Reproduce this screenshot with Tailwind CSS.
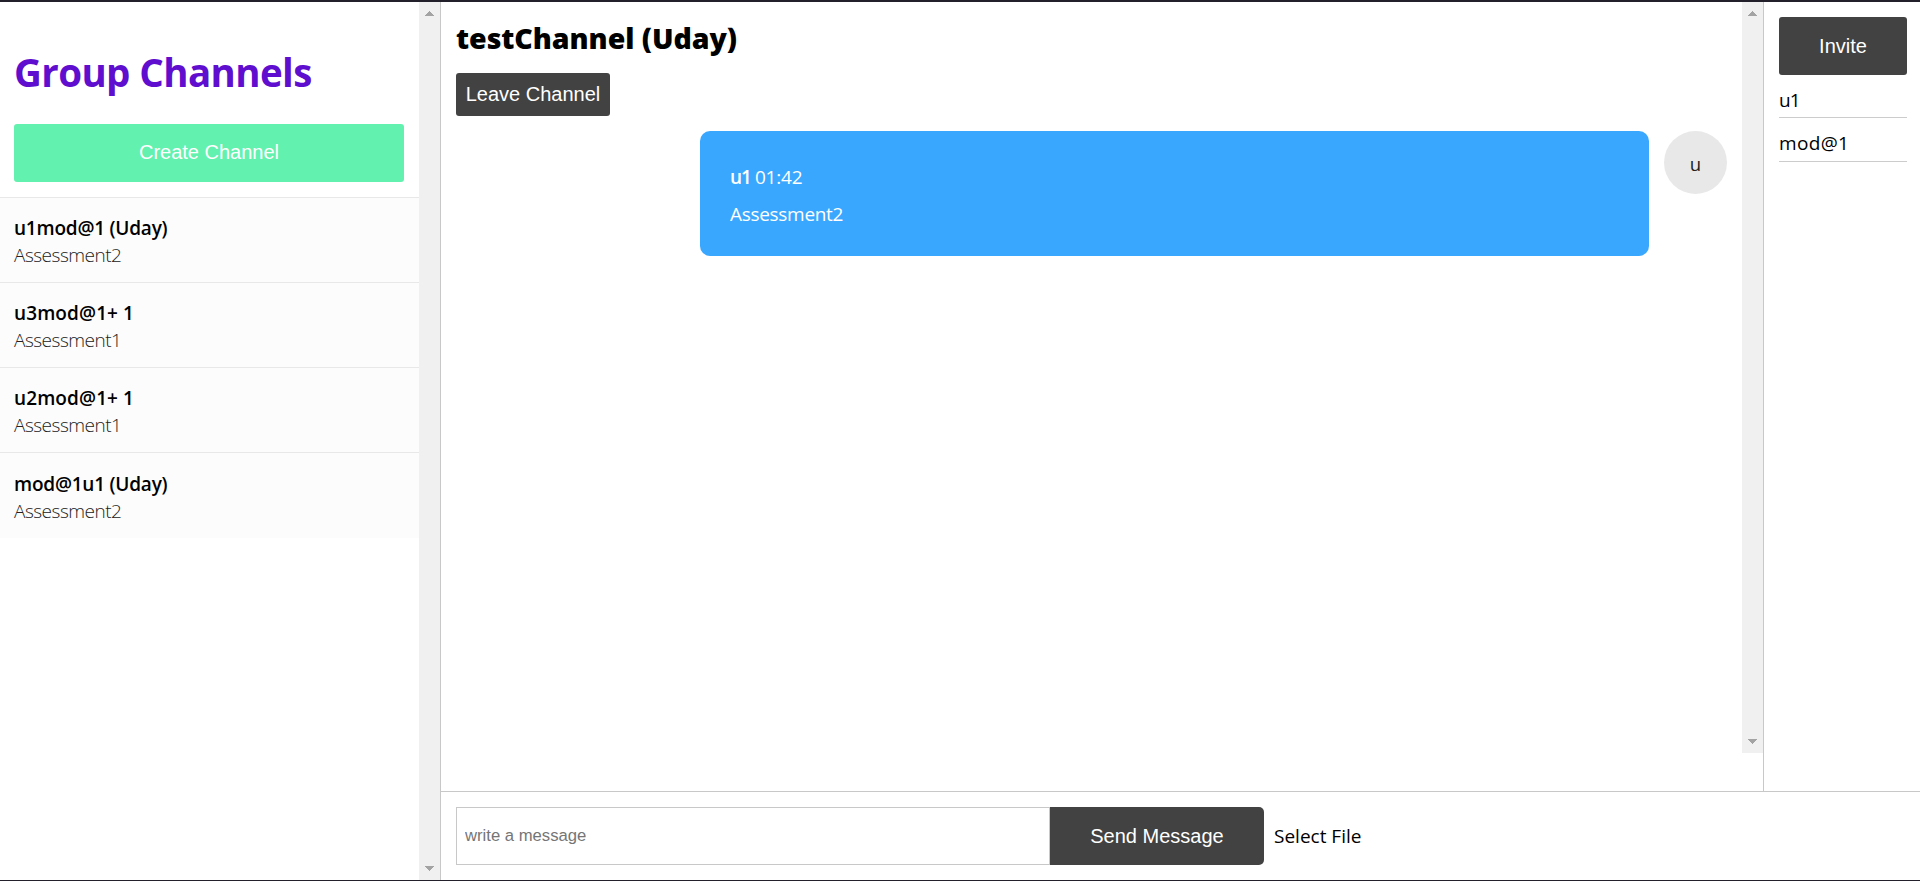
<!DOCTYPE html>
<html lang="en">
<head>
<meta charset="utf-8">
<title>Group Channels</title>
<script src="https://cdn.jsdelivr.net/npm/@tailwindcss/browser@4"></script>
</head>
<body class="flex h-[881px] overflow-hidden bg-white text-black border-t-2 border-b border-[#231f2b] font-['Open_Sans','Noto_Sans',sans-serif] text-[19px] leading-[27px] whitespace-nowrap">
  <aside class="flex w-[441px] shrink-0 border-r border-[#c8c8c8]">
    <div class="w-[419px]">
      <h1 class="mt-[43px] ml-[14px] h-[54px] text-[38.5px] leading-[55px] font-bold tracking-[-0.6px] text-[#5f0dce]">Group Channels</h1>
      <button class="mt-[25px] mx-[14px] block h-[58px] w-[390px] rounded-[3px] bg-[#62f1ae] pb-0.5 text-[20px] text-white font-['Liberation_Sans',sans-serif]">Create Channel</button>
      <ul class="mt-[15px]">
        <li class="h-[85px] border-t border-[#e8e8e8] bg-[#fcfcfc] pl-[14px] pt-[17px]">
          <div class="font-semibold tracking-[-0.22px]">u1mod@1 (Uday)</div>
          <div class="font-light tracking-[-0.5px] text-[#222]">Assessment2</div>
        </li>
        <li class="h-[85px] border-t border-[#e8e8e8] bg-[#fcfcfc] pl-[14px] pt-[17px]">
          <div class="font-semibold tracking-[0.1px]">u3mod@1+ 1</div>
          <div class="font-light tracking-[-0.5px] text-[#222]">Assessment1</div>
        </li>
        <li class="h-[85px] border-t border-[#e8e8e8] bg-[#fcfcfc] pl-[14px] pt-[17px]">
          <div class="font-semibold tracking-[0.1px]">u2mod@1+ 1</div>
          <div class="font-light tracking-[-0.5px] text-[#222]">Assessment1</div>
        </li>
        <li class="h-[86px] border-t border-[#e8e8e8] bg-[#fcfcfc] pl-[14px] pt-[18px]">
          <div class="font-semibold tracking-[-0.22px]">mod@1u1 (Uday)</div>
          <div class="font-light tracking-[-0.5px] text-[#222]">Assessment2</div>
        </li>
      </ul>
    </div>
    <div class="flex w-[21px] flex-col items-center justify-between bg-[#f0f0f0] py-[9px] pr-px">
      <svg class="h-[5px] w-[9px]" viewBox="0 0 9 5" fill="#a3a3a3" shape-rendering="crispEdges"><path d="M4 0h1v1h1v1h1v1h1v1h1v1H0V4h1V3h1V2h1V1h1z"/></svg>
      <svg class="h-[5px] w-[9px]" viewBox="0 0 9 5" fill="#a3a3a3" shape-rendering="crispEdges"><path d="M0 0h9v1H8v1H7v1H6v1H5v1H4V4H3V3H2V2H1V1H0z"/></svg>
    </div>
  </aside>

  <div class="flex min-w-0 flex-1 flex-col">
    <div class="flex h-[789px]">
      <main class="flex w-[1323px] border-r border-[#c8c8c8]">
        <section class="w-[1301px] pt-4 px-[15px]">
          <h2 class="h-10 text-[28.5px] leading-[41px] font-extrabold tracking-[-0.05px]">testChannel (Uday)</h2>
          <button class="mt-[15px] block h-[43px] w-[154px] rounded-[3px] bg-[#424242] pb-px text-[20px] text-white font-['Liberation_Sans',sans-serif]">Leave Channel</button>
          <div class="mt-[15px] flex items-start justify-end gap-[15px]">
            <article class="h-[125px] w-[949px] rounded-[10px] bg-[#3aa7ff] px-[30px] pt-[33px] text-white">
              <div class="flex gap-1"><span class="font-semibold tracking-[-1px]">u1</span><span class="tracking-[-0.2px]">01:42</span></div>
              <p class="mt-2.5 tracking-[-0.3px]">Assessment2</p>
            </article>
            <div class="flex size-[63px] items-center justify-center rounded-full bg-[#e8e8e8] pt-[2px] text-[18.5px] text-[#222]">u</div>
          </div>
        </section>
        <div class="flex h-[751px] w-[21px] flex-col items-center justify-between bg-[#f0f0f0] py-[9px] pr-px">
          <svg class="h-[5px] w-[9px]" viewBox="0 0 9 5" fill="#a3a3a3" shape-rendering="crispEdges"><path d="M4 0h1v1h1v1h1v1h1v1h1v1H0V4h1V3h1V2h1V1h1z"/></svg>
          <svg class="h-[5px] w-[9px]" viewBox="0 0 9 5" fill="#a3a3a3" shape-rendering="crispEdges"><path d="M0 0h9v1H8v1H7v1H6v1H5v1H4V4H3V3H2V2H1V1H0z"/></svg>
        </div>
      </main>
      <aside class="w-[156px] pt-[15px] pl-[15px] pr-[13px]">
        <button class="block h-[58px] w-32 rounded-[3px] bg-[#424242] text-[20px] text-white font-['Liberation_Sans',sans-serif]">Invite</button>
        <div class="mt-[11px] h-8 border-b border-[#ccc] pt-px font-medium tracking-[-0.9px]">u1</div>
        <div class="mt-[11px] h-[33px] border-b border-[#ccc] pt-px font-medium tracking-[0.35px]">mod@1</div>
      </aside>
    </div>
    <form class="flex flex-1 items-start border-t border-[#c8c8c8] pt-[15px] pl-[15px]">
      <input class="h-[58px] w-[594px] border border-[#c8c8c8] px-2 pb-px text-[16.67px] font-['Liberation_Sans',sans-serif] placeholder:text-[#757575]" placeholder="write a message">
      <button type="button" class="h-[58px] w-[214px] rounded-r-[5px] bg-[#424242] text-[20px] text-white font-['Liberation_Sans',sans-serif]">Send Message</button>
      <label class="mt-4 ml-[10px]">Select File</label>
    </form>
  </div>
</body>
</html>
